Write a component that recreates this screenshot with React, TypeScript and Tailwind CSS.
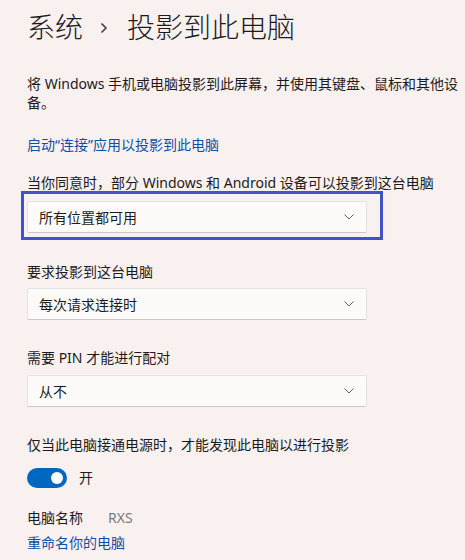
const FONT = "font-['Segoe_UI','Noto_Sans','Noto_Sans_CJK_SC',sans-serif]";

function Chevron() {
  return (
    <svg width="10" height="6" viewBox="0 0 10 6" fill="none" className="shrink-0">
      <path d="M0.5 0.5 L5 5 L9.5 0.5" stroke="#5f5f5f" strokeWidth="1" />
    </svg>
  );
}

function Dropdown({ value }: { value: string }) {
  return (
    <div className="flex h-[32px] w-[340px] items-center justify-between rounded-[2px] border border-[#e8e2e1] border-b-[#cdc8c7] bg-[#fdfbfa] pl-[11px] pr-[12px] text-[14px] text-[#1b1b1b]">
      <span>{value}</span>
      <Chevron />
    </div>
  );
}

export default function App() {
  return (
    <div className={`${FONT} min-h-[560px] w-[465px] bg-[#f9f1f0] pl-[27px] pt-[9px] text-[#1b1b1b]`}>
      {/* 标题 */}
      <h1 className="flex items-center text-[28px] leading-[36px] font-light">
        <span>系统</span>
        <svg width="8" height="12" viewBox="0 0 8 12" fill="none" className="ml-[17px] mr-[19px] mt-[2px]">
          <path d="M1.5 1.5 L6 6 L1.5 10.5" stroke="#3a3a3a" strokeWidth="1.5" />
        </svg>
        <span>投影到此电脑</span>
      </h1>

      <p className="mt-[29px] w-[438px] text-[14px] leading-[19px]">
        将 Windows 手机或电脑投影到此屏幕，并使用其键盘、鼠标和其他设备。
      </p>

      <a className="mt-[23px] block text-[14px] leading-[20px] text-[#0f4fa3]">
        启动“连接”应用以投影到此电脑
      </a>

      <div className="mt-[18px] text-[14px] leading-[20px]">
        当你同意时，部分 Windows 和 Android 设备可以投影到这台电脑
      </div>
      <div className="relative -ml-[6px] -mt-[2px] w-[362px] border-[3px] border-[#4352c9] pb-[4px] pl-[3px] pt-[7px]">
        <Dropdown value="所有位置都可用" />
      </div>

      <div className="mt-[22px] text-[14px] leading-[20px]">要求投影到这台电脑</div>
      <div className="mt-[6px]">
        <Dropdown value="每次请求连接时" />
      </div>

      <div className="mt-[28px] text-[14px] leading-[20px]">需要 PIN 才能进行配对</div>
      <div className="mt-[7px]">
        <Dropdown value="从不" />
      </div>

      <div className="mt-[28px] text-[14px] leading-[20px]">
        仅当此电脑接通电源时，才能发现此电脑以进行投影
      </div>
      <div className="mt-[13px] flex items-center">
        <div className="flex h-[20px] w-[40px] items-center justify-end rounded-full bg-[#0067c0] pr-[4px]">
          <div className="h-[12px] w-[12px] rounded-full bg-white" />
        </div>
        <span className="ml-[12px] text-[14px] leading-[20px]">开</span>
      </div>

      <div className="mt-[20px] flex text-[14px] leading-[20px]">
        <span className="w-[81px]">电脑名称</span>
        <span className="text-[#7a7a7a]">RXS</span>
      </div>
      <a className="mt-[5px] block text-[14px] leading-[20px] text-[#0f4fa3]">重命名你的电脑</a>
    </div>
  );
}
